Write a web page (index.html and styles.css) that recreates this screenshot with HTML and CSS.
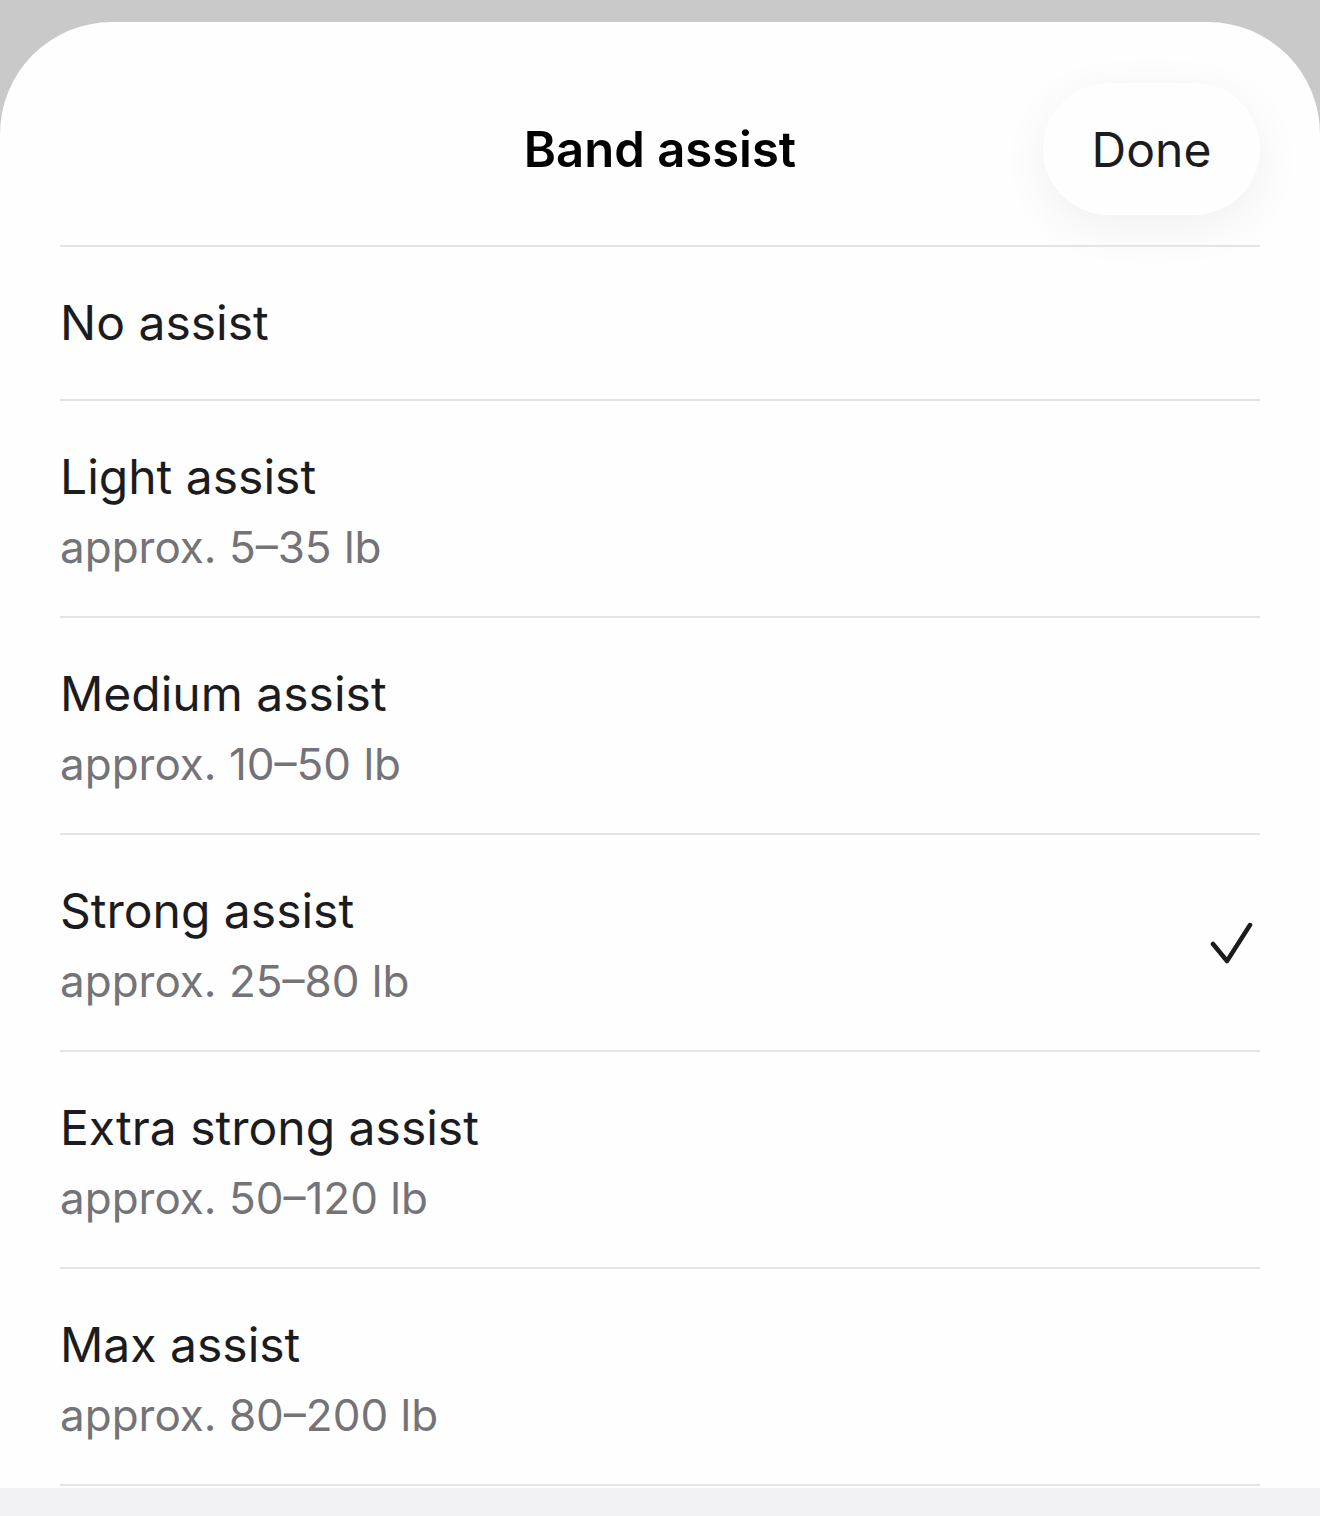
FILE: index.html
```html
<html lang="en">
<head>
  <title>Band assist</title>
  <link rel="stylesheet" href="styles.css">
</head>
<body>
<div class="sheet">
  <header class="sheet-header">
    <span></span>
    <h1 class="sheet-title">Band assist</h1>
    <button class="done">Done</button>
  </header>

  <ul class="options">
    <li class="option">
      <div class="option-text">
        <span class="option-name">No assist</span>
      </div>
    </li>
    <li class="option">
      <div class="option-text">
        <span class="option-name">Light assist</span>
        <span class="option-range">approx. 5–35 lb</span>
      </div>
    </li>
    <li class="option">
      <div class="option-text">
        <span class="option-name">Medium assist</span>
        <span class="option-range">approx. 10–50 lb</span>
      </div>
    </li>
    <li class="option selected">
      <div class="option-text">
        <span class="option-name">Strong assist</span>
        <span class="option-range">approx. 25–80 lb</span>
      </div>
      <svg class="check" width="46" height="46" viewBox="0 0 46 46">
        <path d="M3 22 L17 39 L40 3" fill="none" stroke="#1c1c1e" stroke-width="4.5" stroke-linecap="round" stroke-linejoin="round"/>
      </svg>
    </li>
    <li class="option">
      <div class="option-text">
        <span class="option-name">Extra strong assist</span>
        <span class="option-range">approx. 50–120 lb</span>
      </div>
    </li>
    <li class="option">
      <div class="option-text">
        <span class="option-name">Max assist</span>
        <span class="option-range">approx. 80–200 lb</span>
      </div>
    </li>
  </ul>

  <div class="sheet-footer"></div>
</div>
</body>
</html>
```

FILE: styles.css
```css
html {
    margin: 0;
    padding: 0;
}

body {
    margin: 0;
    background: #c9c9c9;
    font-family: Inter, "Noto Sans", sans-serif;
    color: #1c1c1e;
    overflow: hidden;
}

.sheet {
    margin-top: 22px;
    height: 1494px;
    background: #fefefe;
    border-radius: 112px 112px 0 0;
    display: flex;
    flex-direction: column;
    overflow: hidden;
}

.sheet-header {
    display: grid;
    grid-template-columns: 217px 1fr 217px;
    align-items: center;
    padding: 61px 60px 30px;
}

.sheet-title {
    margin: 0;
    text-align: center;
    font-size: 49px;
    font-weight: 600;
    color: #000;
}

.done {
    height: 132px;
    border: 0;
    border-radius: 66px;
    background: #fefefe;
    box-shadow: 0 12px 48px rgba(0, 0, 0, .06);
    font: 400 48px Inter, "Noto Sans", sans-serif;
    color: #1c1c1e;
}

.options {
    list-style: none;
    margin: 0 60px;
    padding: 0;
    border-top: 2px solid #e4e4e6;
}

.option {
    display: flex;
    align-items: center;
    justify-content: space-between;
    border-bottom: 2px solid #e4e4e6;
    padding-right: 4px;
}

.option-text {
    display: flex;
    flex-direction: column;
    gap: 14px;
    padding: 47px 0 42px;
}

.option:first-child .option-text {
    padding: 47px 0;
}

.option-name {
    font-size: 48px;
    line-height: 58px;
}

.option-range {
    font-size: 44px;
    line-height: 54px;
    color: #737378;
}

.check {
    margin-top: 4px;
}

.sheet-footer {
    flex: 1;
    background: #f2f2f4;
    margin-top: 2px;
}
```
